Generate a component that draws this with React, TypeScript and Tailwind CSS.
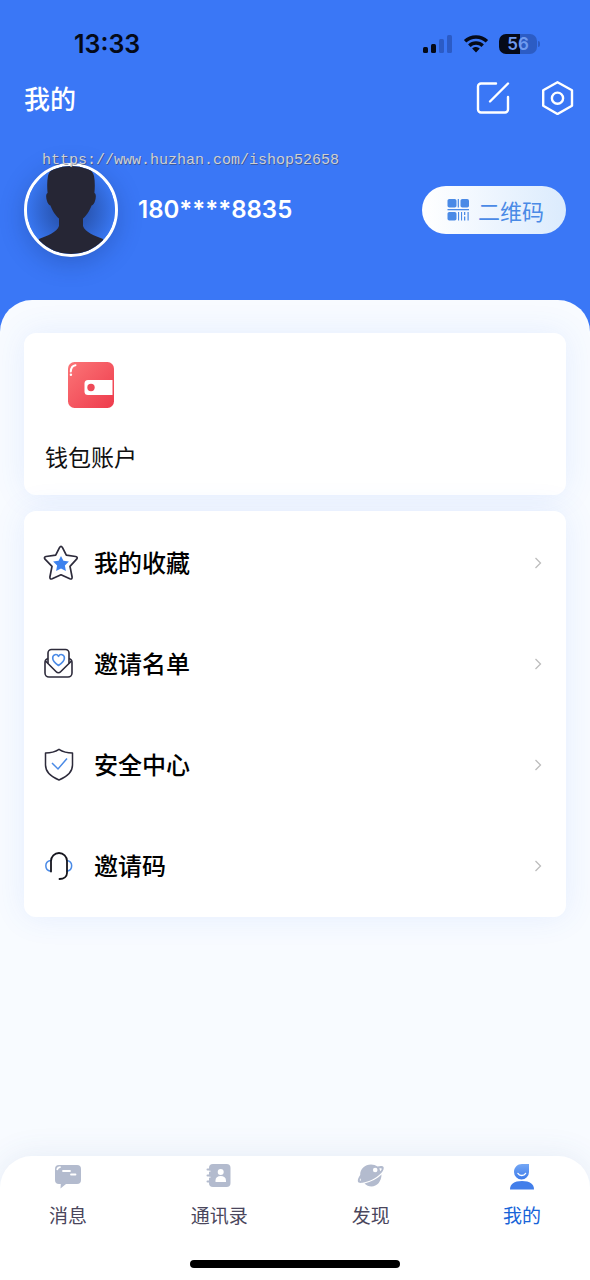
import type { ReactNode } from 'react';

function StatusBar() {
  return (
    <div className="flex h-6 items-center justify-between pl-[74px] pr-[50px]">
      <span className="font-['Inter',sans-serif] text-[25px] font-semibold leading-6 text-[#050a18]">
        13:33
      </span>
      <div className="flex items-center gap-[10px]">
        <svg className="h-5 w-[31px]" viewBox="0 0 31 20" aria-hidden="true">
          <rect x="1" y="13" width="5" height="6" rx="1.5" fill="#050a18" />
          <rect x="9" y="10" width="5" height="9" rx="1.5" fill="#050a18" />
          <rect x="17" y="5" width="5" height="14" rx="1.5" fill="#2b5bc6" />
          <rect x="25" y="1" width="5" height="18" rx="1.5" fill="#2b5bc6" />
        </svg>
        <svg className="h-5 w-[26px]" viewBox="0 0 26 20" aria-hidden="true" fill="#050a18">
          <path d="M13 1.2C8.3 1.2 4 3 .9 6l2.4 2.6A14 14 0 0 1 13 4.800a14 14 0 0 1 9.700 3.800L25.100 6C22 3 17.700 1.200 13 1.200Z" />
          <path d="M13 7.200c-3 0-5.800 1.200-7.900 3.200l2.500 2.600A7.800 7.800 0 0 1 13 10.800c2.100 0 4 .8 5.400 2.200l2.500-2.600A11.400 11.400 0 0 0 13 7.200Z" />
          <path d="M13 13c-1.500 0-2.800.5-3.800 1.500L13 18.600l3.800-4.100A5.300 5.300 0 0 0 13 13Z" />
        </svg>
        <div className="flex items-center gap-px">
          <span className="flex h-5 w-[38px] items-center justify-center rounded-[7px] bg-linear-to-r from-[#050a18] from-55% to-[#2c5cc4] to-55% font-['Inter',sans-serif] text-[17px] font-semibold leading-5 text-[#6f9bf0]">
            56
          </span>
          <span className="h-[6px] w-[2px] rounded-r-full bg-[#2c5cc4]" />
        </div>
      </div>
    </div>
  );
}

function EditIcon() {
  return (
    <svg
      className="size-[34px]"
      viewBox="0 0 34 34"
      fill="none"
      stroke="white"
      strokeWidth="2.400"
      strokeLinecap="round"
      aria-hidden="true"
    >
      <path d="M20 2.500H5a3 3 0 0 0-3 3v23a3 3 0 0 0 3 3h24a3 3 0 0 0 3-3V16" />
      <path d="M14 20.500 32 2.500" />
    </svg>
  );
}

function SettingsIcon() {
  return (
    <svg
      className="size-[34px]"
      viewBox="0 0 34 34"
      fill="none"
      stroke="white"
      strokeWidth="2.400"
      strokeLinejoin="round"
      aria-hidden="true"
    >
      <path d="M17.500 1.300 32 9.200v15.600L17.500 33 3.200 24.800V9.200Z" />
      <circle cx="17.500" cy="17.200" r="5.600" />
    </svg>
  );
}

function Avatar() {
  return (
    <div className="size-[94px] shrink-0 overflow-hidden rounded-full border-[3px] border-white bg-[#3876ee] shadow-[0_6px_24px_rgba(20,45,110,0.3)]">
      <svg className="size-full" viewBox="0 0 88 88" aria-hidden="true">
        <defs>
          <radialGradient id="avatar-glow">
            <stop offset="0.4" stopColor="#2a58b8" />
            <stop offset="1" stopColor="#3876f0" />
          </radialGradient>
        </defs>
        <rect width="88" height="88" fill="url(#avatar-glow)" />
        <path
          d="M21 10C23 2 32-2 44-2s21 4 23 12c1 5 1 11 .4 17 2 1 1.600 5 .6 8-.7 2.500-2 4-3.400 4.400C62.500 45 59 50 56 52.500V60c2 6 12 10 20 13l4 16H8l4-16c8-3 18-7 20-13V52.500c-3-2.500-6.500-7.500-8.600-13.100C22 39 20.700 37.500 20 35c-1-3-1.400-7 .6-8-.6-6-.6-12 .4-17Z"
          fill="#262635"
        />
      </svg>
    </div>
  );
}

function QrIcon() {
  return (
    <svg className="size-6" viewBox="0 0 24 24" fill="#4a8ae6" aria-hidden="true">
      <rect x="1.500" y="1" width="9" height="8.500" rx="1.800" />
      <rect x="11.700" y="1" width="1.200" height="8.500" />
      <rect x="14.500" y="1" width="8.500" height="8.500" rx="1.800" />
      <rect x="1.500" y="11" width="21.500" height="1.300" />
      <rect x="1.500" y="14" width="9" height="8.500" rx="1.800" />
      <rect x="12" y="14" width="1.100" height="8.500" />
      <rect x="15" y="14" width="1.100" height="8.500" />
      <path d="M18 14h1.300v3H18zM18 18.500h1.300v4H18z" />
      <rect x="21.500" y="14" width="1.200" height="8.500" />
    </svg>
  );
}

function WalletIcon() {
  return (
    <svg className="size-[46px]" viewBox="0 0 46 46" aria-hidden="true">
      <defs>
        <linearGradient id="wallet" x1="0" y1="0" x2="1" y2="1">
          <stop offset="0" stopColor="#fb7577" />
          <stop offset="1" stopColor="#ee3b4c" />
        </linearGradient>
      </defs>
      <rect width="46" height="46" rx="6.500" fill="url(#wallet)" />
      <path d="M44.500 18H20a3.500 3.500 0 0 0-3.500 3.500v8A3.500 3.500 0 0 0 20 33h24.500Z" fill="white" />
      <circle cx="23" cy="25.500" r="3.700" fill="#ee4a58" />
      <path d="M2.800 9.500C3 5.500 4.500 3.500 7.500 3.200" fill="none" stroke="white" strokeWidth="2" strokeLinecap="round" />
      <circle cx="2.900" cy="12.700" r="1.200" fill="white" />
    </svg>
  );
}

function StarIcon() {
  return (
    <svg className="size-9" viewBox="0 0 36 36" fill="none" aria-hidden="true">
      <path
        d="M17.500 2.600Q19 .2 20.500 2.600L24.300 10.200 33.600 11.500Q36.200 12.200 34.600 14.200L28 21.300 30.100 32Q30.300 34.600 27.800 33.800L19 29.800 10.200 33.800Q7.700 34.600 7.900 32L10 21.300 3 14.200Q1.600 12.200 4 11.500L13.700 10.200Z"
        stroke="#2d2b3b"
        strokeWidth="1.700"
        strokeLinejoin="round"
      />
      <path
        d="m19 11 2.400 4.800 5.500.8-4 3.900 1 5.500-4.900-2.600-4.900 2.600 1-5.500-4-3.900 5.500-.8Z"
        fill="#3d82ee"
      />
    </svg>
  );
}

function InviteIcon() {
  return (
    <svg
      className="size-9"
      viewBox="0 0 36 36"
      fill="none"
      stroke="#2d2b3b"
      strokeWidth="1.600"
      strokeLinejoin="round"
      aria-hidden="true"
    >
      <path d="M6 17.500V7a3.500 3.500 0 0 1 3.500-3.500h14A3.500 3.500 0 0 1 27 7v10.500" />
      <path d="M6 12.500c-2 .5-3 2-3 4V27a4 4 0 0 0 4 4h19a4 4 0 0 0 4-4V16.500c0-2-1-3.500-3-4" />
      <path d="m3.500 15 10.700 10.800a3 3 0 0 0 4.400 0L29.500 15" />
      <path
        d="M16.500 19.500c-3.700-2.400-5.800-4.800-5.800-7.500 0-3.800 4.300-4.500 5.800-1.700 1.500-2.800 5.900-2.100 5.900 1.700 0 2.700-2.200 5.100-5.900 7.500Z"
        stroke="#4a8ae6"
      />
    </svg>
  );
}

function ShieldIcon() {
  return (
    <svg className="size-9" viewBox="0 0 36 36" fill="none" strokeWidth="1.500" aria-hidden="true">
      <path
        d="M17 2.300c4 2.600 8.500 3.700 13.500 3.700v12c0 8-6 12-13.500 15C9.500 30 3.500 26 3.500 18V6C8.500 6 13 4.900 17 2.300Z"
        stroke="#2d2b3b"
        strokeLinejoin="round"
      />
      <path d="m10 16 6 6 9-10.500" stroke="#4a8ae6" />
    </svg>
  );
}

function HeadsetIcon() {
  return (
    <svg className="size-9" viewBox="0 0 36 36" fill="none" strokeLinecap="round" aria-hidden="true">
      <path d="M8.500 12.500a5.400 5.400 0 0 0 0 10.700M25 12.500a5.400 5.400 0 0 1 0 10.700" stroke="#4a8ae6" strokeWidth="1.500" />
      <path d="M9 23.500V13a8 8 0 0 1 16 0v12c0 3.500-3 6-7.500 6" stroke="#15151d" strokeWidth="1.800" />
    </svg>
  );
}

function ChatIcon() {
  return (
    <svg className="h-7 w-7" viewBox="0 0 28 28" aria-hidden="true">
      <path
        d="M5 3h18a4 4 0 0 1 4 4v11a4 4 0 0 1-4 4H12l-5.500 4.500L6.800 22H5a4 4 0 0 1-4-4V7a4 4 0 0 1 4-4Z"
        fill="#b3bbce"
      />
      <path d="M9 9h7M17 12.500h4.500M3.300 7.300Q3.800 5.400 6 5.200" stroke="white" strokeWidth="1.800" strokeLinecap="round" fill="none" />
    </svg>
  );
}

function ContactsIcon() {
  return (
    <svg className="h-7 w-7" viewBox="0 0 28 28" aria-hidden="true">
      <rect x="4" y="2" width="21.500" height="23" rx="4" fill="#b3bbce" />
      <path d="M2.500 7.500h4M2.500 13.500h4M2.500 19.500h4" stroke="#b3bbce" strokeWidth="2" strokeLinecap="round" />
      <path d="M4 9.200h1.500M4 15.200h1.500" stroke="white" strokeWidth="1" />
      <circle cx="15.700" cy="10" r="3" fill="white" />
      <path d="M10.500 20v-1.500c0-3 2-4.500 5.200-4.500s5.300 1.500 5.300 4.500V20Z" fill="white" />
    </svg>
  );
}

function PlanetIcon() {
  return (
    <svg className="h-7 w-7" viewBox="0 0 28 28" aria-hidden="true">
      <path d="M7.500 21.500C14 20 20.500 16.500 24.500 12.500 24.500 19.500 20 24.500 14.500 24.500c-2.800 0-5-.9-7-3Z" fill="#b3bbce" />
      <path
        d="M3.200 13C3 7 8 2.500 14 2.500c2.500 0 4.700.8 6.500 2.100 2.600-.8 5.700-.9 6.200.9.3 2-1 4.300-3.700 6.800C18.500 16.500 12 19.800 5.500 20.800 2.500 21.300.8 20.600.8 18.700c0-1.700 1-3.700 2.400-5.700Z"
        fill="#b3bbce"
      />
      <circle cx="18.200" cy="8" r="2.300" fill="white" />
      <path d="M22.300 6.300c1.500-.3 2.500-.2 2.500.5 0 .6-.6 1.500-1.500 2.400Z" fill="white" />
      <path d="M3.500 16.300c-1 1.500-1.200 2.600.5 2.500Z" fill="white" />
    </svg>
  );
}

function MineIcon() {
  return (
    <svg className="h-7 w-7" viewBox="0 0 28 28" aria-hidden="true">
      <defs>
        <linearGradient id="mine" x1="0" y1="0" x2="0" y2="1">
          <stop offset="0" stopColor="#74a7f5" />
          <stop offset="1" stopColor="#3d7bea" />
        </linearGradient>
      </defs>
      <path d="M14 2h7v8a7.500 7.500 0 0 1-15 0c0-4.500 3.500-8 8-8Z" fill="url(#mine)" />
      <path d="M10 11.500c1.500 2.700 6 2.700 7.500 0" stroke="white" strokeWidth="1.500" strokeLinecap="round" fill="none" />
      <path d="M2 27.500c0-5.500 4-8.500 12-8.500s12 3 12 8.500Z" fill="#427eea" />
    </svg>
  );
}

const menuItems: { label: string; icon: ReactNode }[] = [
  { label: '我的收藏', icon: <StarIcon /> },
  { label: '邀请名单', icon: <InviteIcon /> },
  { label: '安全中心', icon: <ShieldIcon /> },
  { label: '邀请码', icon: <HeadsetIcon /> },
];

const tabs: { label: string; icon: ReactNode; active?: boolean }[] = [
  { label: '消息', icon: <ChatIcon /> },
  { label: '通讯录', icon: <ContactsIcon /> },
  { label: '发现', icon: <PlanetIcon /> },
  { label: '我的', icon: <MineIcon />, active: true },
];

export default function App() {
  return (
    <div className="flex min-h-screen flex-col bg-[#f8fbff] font-['Noto_Sans_CJK_SC',sans-serif]">
      <header className="bg-[#3a77f6] pb-[75px] pt-8">
        <StatusBar />
        <div className="mt-[22px] flex h-10 items-center justify-between pl-6 pr-4">
          <h1 className="text-[26px] font-medium leading-[38px] text-white">我的</h1>
          <div className="flex gap-[30px]">
            <button type="button" aria-label="编辑">
              <EditIcon />
            </button>
            <button type="button" aria-label="设置">
              <SettingsIcon />
            </button>
          </div>
        </div>
        <div className="relative mt-[45px] flex items-center px-6">
          <Avatar />
          <p className="ml-5 flex-1 font-['Inter',sans-serif] text-2xl font-semibold text-white">
            180****8835
          </p>
          <button
            type="button"
            className="flex h-12 items-center gap-2 rounded-full bg-linear-to-r from-white to-[#dbebfd] pl-6 pr-[22px] text-[22px] leading-8 text-[#4a8ae6]"
          >
            <QrIcon />
            二维码
          </button>
          <span className="absolute -top-[10px] left-[42px] font-['Liberation_Mono',monospace] text-[15px] leading-4 text-[#cfd0d2] [text-shadow:1px_1px_0_rgba(60,60,70,0.5)]">
            https://www.huzhan.com/ishop52658
          </span>
        </div>
      </header>

      <main className="-mt-8 flex flex-1 flex-col gap-4 rounded-t-[32px] bg-[#f8fbff] px-6 pb-8 pt-[33px]">
        <section className="flex rounded-xl bg-white pb-[23px] pl-[21px] pt-[29px] shadow-[0_0_32px_rgba(58,119,246,0.1)]">
          <button type="button" className="flex flex-col items-center gap-8">
            <WalletIcon />
            <span className="text-[23px] leading-8 text-[#111111]">钱包账户</span>
          </button>
        </section>

        <ul className="rounded-xl bg-white py-px shadow-[0_0_32px_rgba(58,119,246,0.1)]">
          {menuItems.map((item) => (
            <li key={item.label}>
              <a href="#" className="flex h-[101px] items-center pl-[18px] pr-6">
                {item.icon}
                <span className="ml-4 flex-1 pb-[2px] text-2xl font-medium text-black">{item.label}</span>
                <svg
                  className="h-3 w-2"
                  viewBox="0 0 8 12"
                  fill="none"
                  stroke="#bdbdbd"
                  strokeWidth="1.300"
                  aria-hidden="true"
                >
                  <path d="m1.500 1 5 5-5 5" />
                </svg>
              </a>
            </li>
          ))}
        </ul>
      </main>

      <nav className="rounded-t-[32px] bg-white pt-[6px] shadow-[0_0_32px_rgba(58,100,160,0.1)]">
        <div className="flex justify-between px-[33px]">
          {tabs.map((tab) => (
            <a key={tab.label} href="#" className="flex w-[70px] flex-col items-center">
              {tab.icon}
              <span
                className={`mt-[11px] text-[19px] leading-7 whitespace-nowrap ${
                  tab.active ? 'text-[#1764d8]' : 'text-[#4a465c]'
                }`}
              >
                {tab.label}
              </span>
            </a>
          ))}
        </div>
        <div className="mx-auto mb-3 mt-[31px] h-2 w-[210px] rounded-full bg-black" />
      </nav>
    </div>
  );
}
